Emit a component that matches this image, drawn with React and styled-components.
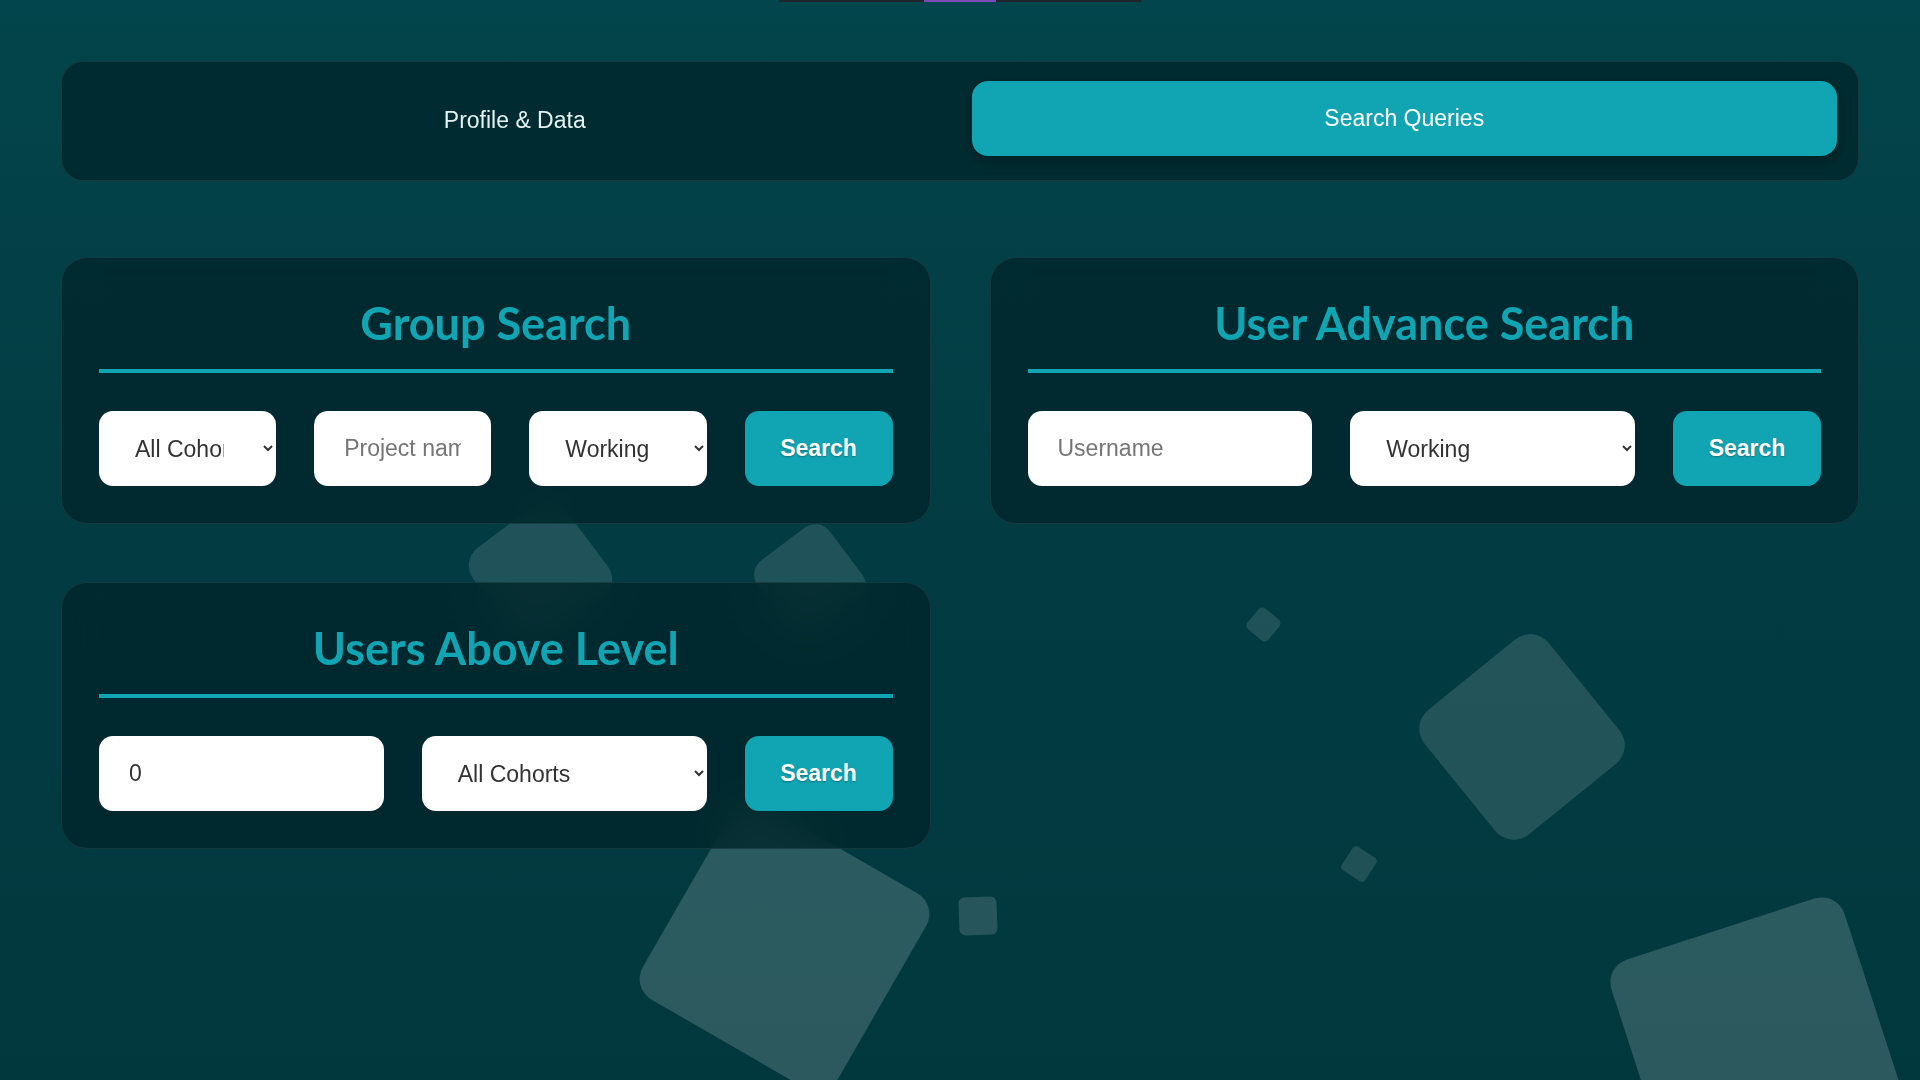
import React from 'react'
import styled, { createGlobalStyle } from 'styled-components'

const GlobalStyle = createGlobalStyle`
    * {
        box-sizing: border-box;
    }

    body {
        margin: 0;
        font-family: "Liberation Sans", Arial, sans-serif;
        background: #023b41;
    }
`

const shapes = [
    { x: 540, y: 572, size: 115, r: 22, rot: -37, alpha: 0.12 },
    { x: 810, y: 580, size: 90, r: 18, rot: -37, alpha: 0.12 },
    { x: 1263, y: 624, size: 27, r: 5, rot: 40, alpha: 0.12 },
    { x: 1522, y: 737, size: 160, r: 24, rot: 51, alpha: 0.13 },
    { x: 1359, y: 864, size: 28, r: 4, rot: 33, alpha: 0.12 },
    { x: 1758, y: 1045, size: 245, r: 24, rot: -18, alpha: 0.17 },
    { x: 784, y: 946, size: 225, r: 24, rot: 30, alpha: 0.17 },
    { x: 978, y: 916, size: 38, r: 6, rot: -2, alpha: 0.15 },
]

function SearchCard({ title, children }) {
    return (
        <Card>
            <Title>{title}</Title>
            <Row>{children}</Row>
        </Card>
    )
}

function App() {
    return (
        <Page>
            <GlobalStyle />

            {/* floating background squares */}
            <Decor>
                {shapes.map((s, i) => (
                    <Shape key={i} $x={s.x} $y={s.y} $size={s.size} $r={s.r} $rot={s.rot} $alpha={s.alpha} />
                ))}
            </Decor>

            <Indicator>
                <IndicatorThumb />
            </Indicator>

            <TabBar>
                <Tab>Profile &amp; Data</Tab>
                <Tab $active>Search Queries</Tab>
            </TabBar>

            <Grid>
                <SearchCard title="Group Search">
                    <Select defaultValue="all">
                        <option value="all">All Cohorts</option>
                    </Select>
                    <Field type="text" placeholder="Project name" />
                    <Select defaultValue="working">
                        <option value="working">Working</option>
                        <option value="finished">Finished</option>
                    </Select>
                    <SearchButton>Search</SearchButton>
                </SearchCard>

                <SearchCard title="User Advance Search">
                    <Field type="text" placeholder="Username" />
                    <Select defaultValue="working">
                        <option value="working">Working</option>
                        <option value="finished">Finished</option>
                    </Select>
                    <SearchButton>Search</SearchButton>
                </SearchCard>

                <SearchCard title="Users Above Level">
                    <Field type="number" defaultValue="0" />
                    <Select defaultValue="all">
                        <option value="all">All Cohorts</option>
                    </Select>
                    <SearchButton>Search</SearchButton>
                </SearchCard>
            </Grid>
        </Page>
    )
}

export default App

const Page = styled.div`
    position: relative;
    min-height: 100vh;
    overflow: hidden;
    padding: 0 61px 80px;
    background: linear-gradient(180deg, #03454c 0%, #023d43 40%, #01383e 100%);
`

const Decor = styled.div`
    position: absolute;
    inset: 0;
    z-index: 0;
    pointer-events: none;
`

const Shape = styled.span`
    position: absolute;
    left: ${p => p.$x - p.$size / 2}px;
    top: ${p => p.$y - p.$size / 2}px;
    width: ${p => p.$size}px;
    height: ${p => p.$size}px;
    border-radius: ${p => p.$r}px;
    background: rgba(255, 255, 255, ${p => p.$alpha});
    transform: rotate(${p => p.$rot}deg);
`

const Indicator = styled.div`
    position: relative;
    z-index: 1;
    width: 362px;
    height: 2px;
    margin: 0 auto;
    display: flex;
    justify-content: center;
    background: #1f2528;
`

const IndicatorThumb = styled.span`
    width: 72px;
    height: 100%;
    background: #7a4bb9;
`

const TabBar = styled.div`
    position: relative;
    z-index: 1;
    margin-top: 59px;
    display: flex;
    gap: 24px;
    padding: 19px 21px 24px 20px;
    background: rgba(0, 40, 45, 0.85);
    border: 1px solid rgba(255, 255, 255, 0.08);
    border-radius: 22px;
    backdrop-filter: blur(12px);
`

const Tab = styled.button`
    flex: 1 1 100px;
    height: 75px;
    padding: ${p => (p.$active ? '0' : '4px 0 0')};
    border: 0;
    border-radius: 16px;
    background: ${p => (p.$active ? '#11a5b3' : 'transparent')};
    color: ${p => (p.$active ? '#ffffff' : '#e3f1f2')};
    font: 400 23px "Liberation Sans", Arial, sans-serif;
    box-shadow: ${p => (p.$active ? '0 4px 14px rgba(0, 0, 0, 0.25)' : 'none')};
    cursor: pointer;
`

const Grid = styled.div`
    position: relative;
    z-index: 1;
    margin-top: 76px;
    display: grid;
    grid-template-columns: repeat(2, minmax(0, 1fr));
    column-gap: 59px;
    row-gap: 58px;
`

const Card = styled.section`
    padding: 38px 37px 37px;
    background: rgba(0, 38, 43, 0.8);
    border: 1px solid rgba(255, 255, 255, 0.08);
    border-radius: 26px;
    backdrop-filter: blur(18px);
`

const Title = styled.h2`
    margin: 0 0 38px;
    padding: 2px 0 21px;
    border-bottom: 4px solid #11a5b3;
    text-align: center;
    font: 700 45px/50px Lato, "Open Sans", sans-serif;
    color: #11a5b3;
`

const Row = styled.div`
    display: flex;
    gap: 38px;
`

const Field = styled.input`
    flex: 1 1 100px;
    min-width: 0;
    height: 75px;
    padding: 0 30px;
    border: 0;
    border-radius: 14px;
    background: #ffffff;
    color: #333333;
    font: 400 23px "Liberation Sans", Arial, sans-serif;
    outline: none;

    &::placeholder {
        color: #757575;
    }

    &::-webkit-inner-spin-button {
        -webkit-appearance: none;
    }
`

const Select = styled.select`
    flex: 1 1 100px;
    min-width: 0;
    height: 75px;
    padding: 0 36px 0 32px;
    border: 0;
    border-radius: 14px;
    background: #ffffff;
    color: #333333;
    font: 400 23px "Liberation Sans", Arial, sans-serif;
    outline: none;
`

const SearchButton = styled.button`
    flex: 0 0 148px;
    height: 75px;
    border: 0;
    border-radius: 14px;
    background: #11a5b3;
    color: #ffffff;
    font: 700 23px "Liberation Sans", Arial, sans-serif;
    text-shadow: 0 1px 2px rgba(0, 0, 0, 0.3);
    cursor: pointer;
`
